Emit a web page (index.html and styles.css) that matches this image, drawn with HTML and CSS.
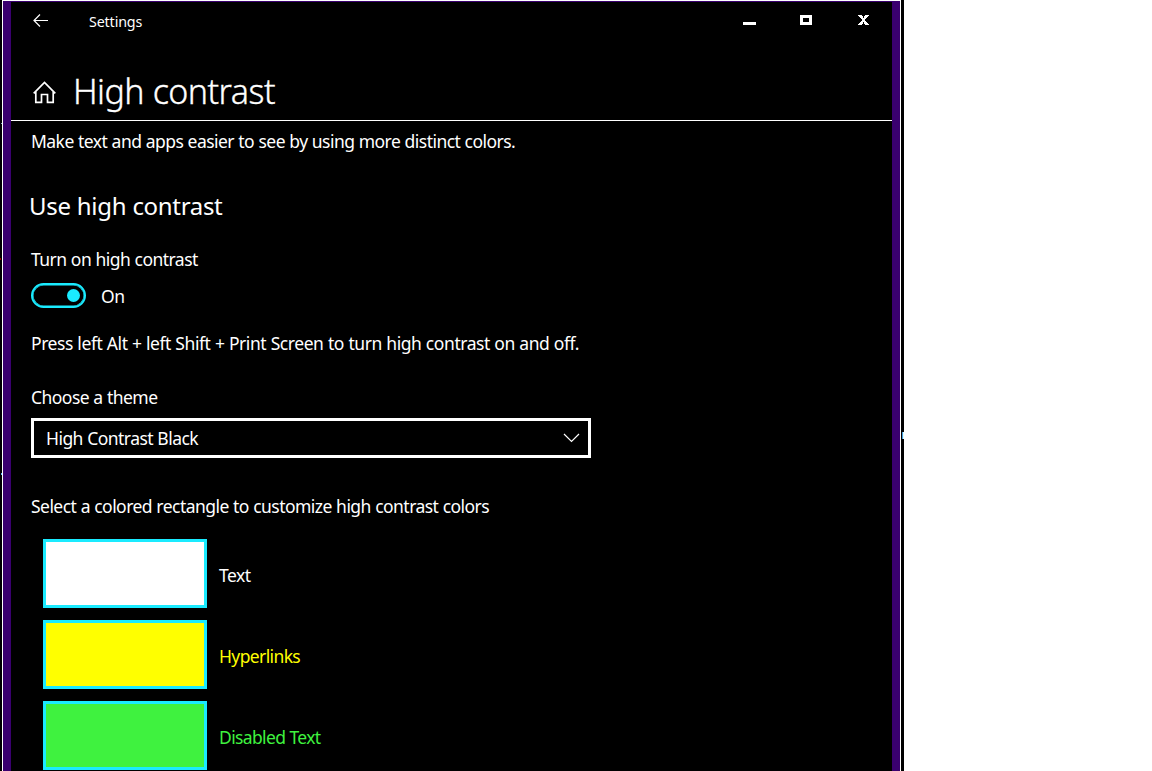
FILE: index.html
```html
<!DOCTYPE html>
<html lang="en">
<head>
<meta charset="utf-8">
<title>Settings</title>
<link rel="stylesheet" href="styles.css">
</head>
<body>
<div class="desktop">
  <div class="window">
    <header class="titlebar">
      <svg class="back" width="16" height="14" viewBox="0 0 16 14"><path d="M15 6.5H1M7 .5L1 6.5L7 12.5"/></svg>
      <span class="app-name">Settings</span>
      <div class="controls">
        <svg width="13" height="10" viewBox="0 0 13 10" shape-rendering="crispEdges"><path d="M0 7h13v3H0z"/></svg>
        <svg width="12" height="10" viewBox="0 0 12 10" shape-rendering="crispEdges"><path fill-rule="evenodd" d="M0 0h12v10H0zM3 3v4h6V3z"/></svg>
        <svg class="close" width="11" height="10" viewBox="0 0 11 10" shape-rendering="crispEdges"><path d="M0 0h4v1h1v2h1V1h1V0h4v1h-1v1H9v1H8v1H7v2h1v1h1v1h1v1h1v1H7V9H6V7H5v2H4v1H0V9h1V8h1V7h1V6h1V4H3V3H2V2H1V1H0z"/></svg>
      </div>
    </header>
    <div class="page-head">
      <svg class="home" width="24" height="23" viewBox="0 0 24 23"><path d="M.7 12.300L11.500 1.500L22.300 12.300M2.800 10.500V21.300H8.500V13.500H14.500V21.300H20.200V10.500"/></svg>
      <h1>High contrast</h1>
    </div>
    <main>
      <p class="intro">Make text and apps easier to see by using more distinct colors.</p>
      <h2>Use high contrast</h2>
      <p class="label-turn">Turn on high contrast</p>
      <div class="toggle-row"><span class="toggle"><span class="knob"></span></span><span class="on">On</span></div>
      <p class="hint">Press left Alt + left Shift + Print Screen to turn high contrast on and off.</p>
      <p class="label-theme">Choose a theme</p>
      <div class="select"><span>High Contrast Black</span><svg width="17" height="10" viewBox="0 0 17 10"><path d="M1 1L8.500 8.500L16 1"/></svg></div>
      <p class="label-colors">Select a colored rectangle to customize high contrast colors</p>
      <div class="swatches">
        <div class="swatch-row text"><span class="swatch"></span><span class="name">Text</span></div>
        <div class="swatch-row links"><span class="swatch"></span><span class="name">Hyperlinks</span></div>
        <div class="swatch-row disabled"><span class="swatch"></span><span class="name">Disabled Text</span></div>
      </div>
    </main>
  </div>
  <span class="speck speck-a"></span>
  <span class="speck speck-b"></span>
  <span class="speck speck-c"></span>
  <span class="speck speck-d"></span>
</div>
</body>
</html>
```
FILE: styles.css
```css
* { box-sizing: border-box; }
body { margin: 0; height: 771px; overflow: hidden; background: #fff; color: #fff; font: 17.5px/24px "Noto Sans", "Open Sans", sans-serif; letter-spacing: -.54px; word-spacing: .3px; }
h1, h2, p { margin: 0; font-weight: 400; white-space: nowrap; }
svg { display: block; }
.desktop { position: relative; width: 904px; height: 771px; padding: 0 3px 0 2px; background: #000; overflow: hidden; }
.window { width: 899px; height: 800px; background: #000; border: 1px solid #fff; border-bottom: 0; box-shadow: inset 8px 0 #3a006f, inset -8px 0 #3a006f, inset 0 1px #3a006f; padding: 1px 8px 0; }
.titlebar { display: flex; height: 50px; padding: 0 23px 0 22px; }
.back { margin-top: 12px; fill: none; stroke: #fff; stroke-width: 1.2; }
.app-name { margin: 8px 0 0 40px; font-size: 14.3px; letter-spacing: -.15px; }
.controls { margin: 13px 0 0 auto; display: flex; gap: 44px; fill: #fff; }
.close { margin-left: 2px; }
.page-head { display: flex; height: 69px; padding-left: 22px; border-bottom: 1px solid #fff; }
.home { margin-top: 29px; fill: none; stroke: #fff; stroke-width: 1.7; }
h1 { margin-left: 16px; padding-top: 15px; font-size: 34px; line-height: 48px; font-weight: 300; letter-spacing: -.53px; -webkit-text-stroke: .35px #fff; }
main { padding: 8px 0 0 20px; }
h2 { margin: 35px 0 0 -2px; font-size: 24px; line-height: 36px; letter-spacing: -.32px; }
.label-turn { margin-top: 23px; }
.toggle-row { display: flex; gap: 15px; margin-top: 12px; height: 25px; }
.toggle { width: 55px; height: 25px; border: 2px solid #1aebff; box-shadow: inset 0 0 0 .5px #1aebff; border-radius: 13px; display: flex; align-items: center; justify-content: flex-end; padding-right: 4px; }
.knob { width: 13px; height: 13px; border-radius: 50%; background: #1aebff; }
.on { margin-top: 1px; }
.hint { margin-top: 23px; letter-spacing: -.43px; }
.label-theme { margin-top: 30px; }
.select { margin-top: 9px; width: 560px; height: 40px; border: 3px solid #fff; display: flex; align-items: center; justify-content: space-between; padding: 0 8px 0 12px; }
.select path { fill: none; stroke: #fff; stroke-width: 1.200; }
.label-colors { margin-top: 36px; }
.swatches { margin: 21px 0 0 12px; display: grid; gap: 12px; }
.swatch-row { display: flex; align-items: center; gap: 12px; height: 69px; }
.swatch { width: 164px; height: 69px; border: 3px solid #1aebff; background: #fff; }
.name { padding-top: 2px; }
.links { color: #ff0; } .links .swatch { background: #ff0; }
.links .name { letter-spacing: -.62px; }
.disabled { color: #3ff23f; } .disabled .swatch { background: #3ff23f; }
.disabled .name { letter-spacing: -.64px; }
/* Slivers of the windows behind, along the window's edge */
.speck { position: absolute; left: 1px; width: 1px; height: 1px; background: #8ac; }
.speck-a { top: 123px; }
.speck-b { left: 0; top: 258px; height: 2px; background: #900; }
.speck-c { top: 473px; height: 2px; background: #6bf; }
.speck-d { left: 902px; top: 432px; width: 2px; height: 7px; background: #dff; border-left: 1px solid #49d; }
```
